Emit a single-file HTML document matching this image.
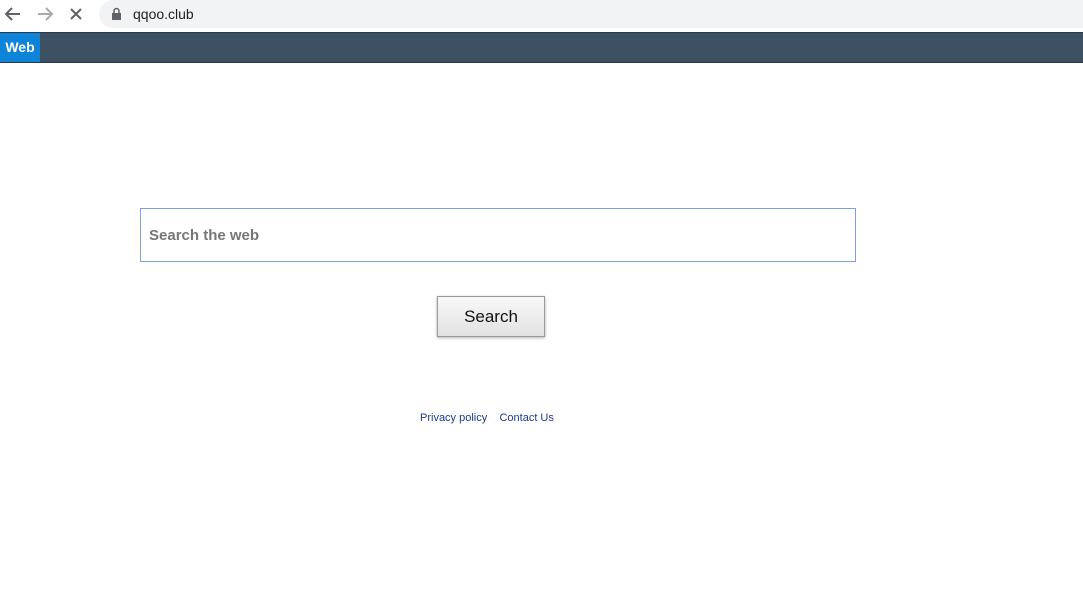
<!DOCTYPE html>
<html><head><style>
body{margin:0;width:1083px;height:615px;background:#fff;font-family:"Liberation Sans",Arial,sans-serif;position:relative;overflow:hidden}
.chrome{position:absolute;top:0;left:0;width:1083px;height:32px;background:#fff}
.url{position:absolute;left:99px;top:0;width:1000px;height:28px;background:#f1f3f4;border-radius:14px}
.url span{position:absolute;left:34px;top:6px;font-size:14px;color:#202124}
.bar{position:absolute;top:32px;left:0;width:1083px;height:31px;background:#3e5163;border-top:1px solid #2c3a47;border-bottom:1px solid #2c3a47;box-sizing:border-box}
.web{position:absolute;left:0;top:0;width:40px;height:29px;background:#0d84d7;color:#fff;font-weight:bold;font-size:14px;line-height:29px;text-align:center}
.inp{position:absolute;left:140px;top:208px;width:716px;height:54px;border:1px solid #7b9fe0;box-sizing:border-box}
.inp span{position:absolute;left:8px;top:18px;font-size:15px;font-weight:bold;color:#777}
.btn{position:absolute;left:437px;top:296px;width:108px;height:41px;box-sizing:border-box;border:1px solid #999;background:linear-gradient(#f8f8f8,#e2e2e2);box-shadow:0 1px 3px rgba(0,0,0,.3);font-size:17px;text-align:center;line-height:39px;color:#111}
.links{position:absolute;top:412px;left:420px;font-size:11px;color:#1a3a8c}
</style></head><body>
<div class="chrome">
<svg width="100" height="30" style="position:absolute;left:0;top:0">
<path d="M20 14H7M12 8l-6 6 6 6" stroke="#5f6368" stroke-width="2" fill="none"/>
<path d="M38 14h13M46 8l6 6-6 6" stroke="#aaa" stroke-width="2" fill="none"/>
<path d="M71 9l10 10M81 9l-10 10" stroke="#5f6368" stroke-width="2" fill="none"/>
</svg>
<div class="url"><svg width="12" height="14" style="position:absolute;left:12px;top:7px"><rect x="1" y="6" width="9" height="7" fill="#5f6368"/><path d="M3 6V4a2.5 2.5 0 0 1 5 0v2" stroke="#5f6368" stroke-width="1.5" fill="none"/></svg><span>qqoo.club</span></div>
</div>
<div class="bar"><div class="web">Web</div></div>
<div class="inp"><span>Search the web</span></div>
<div class="btn">Search</div>
<div class="links">Privacy policy&nbsp;&nbsp;&nbsp;&nbsp;Contact Us</div>
</body></html>
